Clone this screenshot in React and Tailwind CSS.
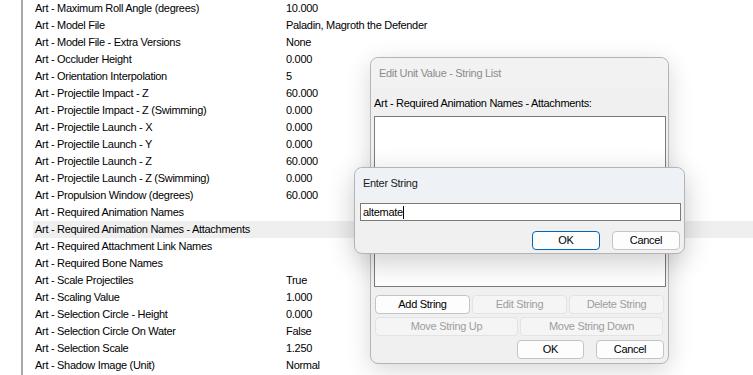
import React from "react";

const rows = [
  ["Art - Maximum Roll Angle (degrees)", "10.000"],
  ["Art - Model File", "Paladin, Magroth the Defender"],
  ["Art - Model File - Extra Versions", "None"],
  ["Art - Occluder Height", "0.000"],
  ["Art - Orientation Interpolation", "5"],
  ["Art - Projectile Impact - Z", "60.000"],
  ["Art - Projectile Impact - Z (Swimming)", "0.000"],
  ["Art - Projectile Launch - X", "0.000"],
  ["Art - Projectile Launch - Y", "0.000"],
  ["Art - Projectile Launch - Z", "60.000"],
  ["Art - Projectile Launch - Z (Swimming)", "0.000"],
  ["Art - Propulsion Window (degrees)", "60.000"],
  ["Art - Required Animation Names", ""],
  ["Art - Required Animation Names - Attachments", "", true],
  ["Art - Required Attachment Link Names", ""],
  ["Art - Required Bone Names", ""],
  ["Art - Scale Projectiles", "True"],
  ["Art - Scaling Value", "1.000"],
  ["Art - Selection Circle - Height", "0.000"],
  ["Art - Selection Circle On Water", "False"],
  ["Art - Selection Scale", "1.250"],
  ["Art - Shadow Image (Unit)", "Normal"],
];

const WinButton = ({ children, width, disabled, focused }) => (
  <div
    className={`h-[19px] flex items-center justify-center rounded-[4px] border ${
      disabled
        ? "bg-[#f5f5f5] border-[#e3e3e3] text-[#9d9d9d]"
        : focused
        ? "bg-[#fdfdfd] border-[#0067c0] text-black"
        : "bg-[#fdfdfd] border-[#c4c4c4] text-black"
    }`}
    style={{ width }}
  >
    {children}
  </div>
);

export default function App() {
  return (
    <div
      className="relative w-[753px] h-[375px] overflow-hidden bg-white text-[11px] tracking-[-0.3px] text-black"
      style={{ fontFamily: '"Liberation Sans", Arial, sans-serif' }}
    >
      {/* ===== PROPERTY LIST ===== */}
      <div className="flex h-full">
        <div className="w-[21px] shrink-0" />
        <div className="w-[2px] shrink-0 bg-[#a8a8a8]" />
        <div className="w-[10px] shrink-0" />
        <div className="flex-1 flex flex-col">
          {rows.map(([label, value, selected]) => (
            <div
              key={label}
              className={`h-[17px] shrink-0 flex items-center ${selected ? "bg-[#efefef]" : ""}`}
            >
              <span className="w-[253px] pl-[2px] shrink-0 whitespace-nowrap">{label}</span>
              <span className="whitespace-nowrap">{value}</span>
            </div>
          ))}
        </div>
      </div>

      {/* ===== EDIT UNIT VALUE DIALOG ===== */}
      <div className="absolute left-[370px] top-[57px] w-[299px] h-[307px] rounded-[8px] border border-[#b4b4b4] bg-[#f0f0f0] shadow-[0_6px_24px_rgba(0,0,0,0.16)] flex flex-col">
        <div className="h-[31px] shrink-0 pl-[8px] flex items-center text-[#8c8c8c] rounded-t-[8px] bg-[#f2f2f2]">
          Edit Unit Value - String List
        </div>
        <div className="flex flex-col pl-[3px]">
          <div className="h-[16px] mt-[6px] flex items-center whitespace-nowrap">
            Art - Required Animation Names - Attachments:
          </div>
          <div className="mt-[5px] w-[292px] h-[171px] bg-white border border-[#7a7a7a]" />
          <div className="mt-[8px] flex gap-[2px] pl-[1px]">
            <WinButton width={95}>Add String</WinButton>
            <WinButton width={95} disabled>Edit String</WinButton>
            <WinButton width={95} disabled>Delete String</WinButton>
          </div>
          <div className="mt-[3px] flex gap-[2px] pl-[1px]">
            <WinButton width={143} disabled>Move String Up</WinButton>
            <WinButton width={143} disabled>Move String Down</WinButton>
          </div>
          <div className="mt-[4px] flex justify-end gap-[12px] w-[290px]">
            <WinButton width={67}>OK</WinButton>
            <WinButton width={68}>Cancel</WinButton>
          </div>
        </div>
      </div>

      {/* ===== ENTER STRING DIALOG ===== */}
      <div className="absolute left-[354px] top-[167px] w-[331px] h-[87px] rounded-[8px] border border-[#b4b4b4] bg-[#f0f0f0] shadow-[0_8px_28px_rgba(0,0,0,0.2)] flex flex-col">
        <div className="h-[31px] shrink-0 pl-[8px] flex items-center text-[#1a1a1a] rounded-t-[8px] bg-[#eef2f7]">
          Enter String
        </div>
        <div className="flex flex-col pl-[5px] pr-[4px]">
          <div className="mt-[4px] w-[321px] h-[18px] bg-white border border-[#7a7a7a] flex items-center pl-[2px]">
            <span>altemate</span>
            <span className="w-[1px] h-[13px] bg-black" />
          </div>
          <div className="mt-[10px] flex justify-end gap-[12px]">
            <WinButton width={68} focused>OK</WinButton>
            <WinButton width={68}>Cancel</WinButton>
          </div>
        </div>
      </div>
    </div>
  );
}
